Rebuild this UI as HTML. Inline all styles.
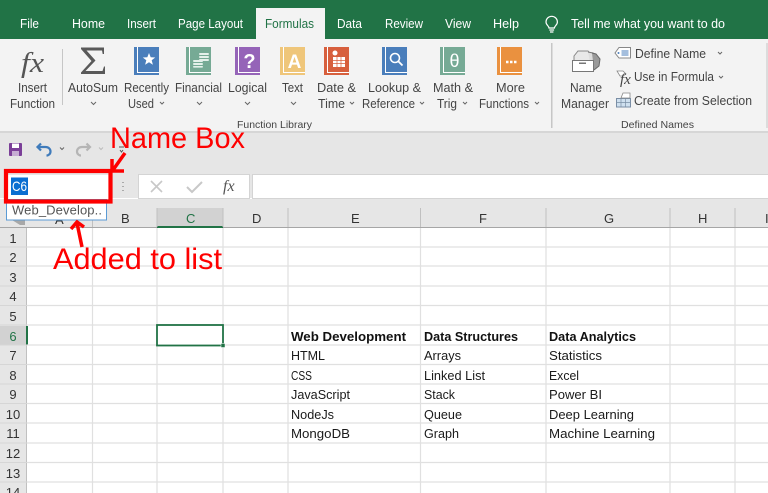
<!DOCTYPE html>
<html><head><meta charset="utf-8"><title>Excel Name Box</title>
<style>
html,body{margin:0;padding:0;background:#fff;width:768px;height:493px;overflow:hidden}
svg{display:block;font-family:"Liberation Sans",sans-serif}
.t{fill:#fff;font-size:12.5px}
.r{fill:#444;font-size:12.5px}
.s{fill:#444;font-size:10.5px}
.c{fill:#1a1a1a;font-size:13px}
.b{fill:#111;font-size:13px;font-weight:bold}
.h{fill:#333;font-size:13px}
.ch{fill:none;stroke:#666;stroke-width:1}
</style></head><body>
<svg width="768" height="493" viewBox="0 0 768 493" xmlns="http://www.w3.org/2000/svg">
<!-- backgrounds -->
<rect width="768" height="39" fill="#217346"/>
<rect y="39" width="768" height="93" fill="#f3f3f3"/>
<rect y="131" width="768" height="2" fill="#d6d6d6"/>
<rect y="133" width="768" height="65" fill="#e6e6e6"/>
<rect x="256" y="8" width="69" height="32" fill="#f3f3f3"/>
<!-- tabs -->
<text class="t" x="20" y="28" textLength="19" lengthAdjust="spacingAndGlyphs">File</text>
<text class="t" x="72" y="28" textLength="33" lengthAdjust="spacingAndGlyphs">Home</text>
<text class="t" x="127" y="28" textLength="29" lengthAdjust="spacingAndGlyphs">Insert</text>
<text class="t" x="178" y="28" textLength="65" lengthAdjust="spacingAndGlyphs">Page Layout</text>
<text x="265" y="28" font-size="12.5" fill="#217346" textLength="49" lengthAdjust="spacingAndGlyphs">Formulas</text>
<text class="t" x="337" y="28" textLength="25" lengthAdjust="spacingAndGlyphs">Data</text>
<text class="t" x="385" y="28" textLength="38" lengthAdjust="spacingAndGlyphs">Review</text>
<text class="t" x="445" y="28" textLength="26" lengthAdjust="spacingAndGlyphs">View</text>
<text class="t" x="493" y="28" textLength="26" lengthAdjust="spacingAndGlyphs">Help</text>
<text class="t" x="571" y="28" textLength="154" lengthAdjust="spacingAndGlyphs">Tell me what you want to do</text>
<!-- bulb -->
<path d="M549 28c0-2-3-3-3-6a5.700 5.700 0 0 1 11.400 0c0 3-3 4-3 6z M549.300 30h4.800 M550 32h3.400" fill="none" stroke="#fff" stroke-width="1.200"/>
<!-- separators -->
<rect x="62" y="49" width="1" height="56" fill="#c6c6c6"/>
<rect x="551" y="43" width="1.500" height="85" fill="#c6c6c6"/>
<rect x="766.500" y="43" width="1" height="85" fill="#c6c6c6"/>
<!-- fx -->
<text x="21" y="72" font-family="Liberation Serif" font-style="italic" font-size="29" fill="#555" textLength="23" lengthAdjust="spacingAndGlyphs">fx</text>
<!-- sigma -->
<path d="M81 47.500H104V54H102.700L102 50.500H86.500L95.500 60.500 85.500 71H102.500L104 66.500H105V74H81V72.500L91.500 61 81 49z" fill="#595959"/>
<!-- books -->
<g>
<rect x="134" y="47" width="25" height="28" fill="#4a7ebb"/><rect x="137" y="47" width="1" height="26" fill="#fff"/><rect x="137" y="72" width="22" height="1" fill="#fff"/>
<path d="M149 53l1.700 4.300 4.500.2-3.500 2.800 1.200 4.500-3.900-2.500-3.900 2.500 1.200-4.500-3.500-2.800 4.500-.2z" fill="#fff"/>
<rect x="186" y="47" width="25" height="28" fill="#76aa95"/><rect x="189" y="47" width="1" height="26" fill="#fff"/><rect x="189" y="72" width="22" height="1" fill="#fff"/>
<rect x="199" y="53" width="10" height="2" rx="1" fill="#e4f0ea"/><rect x="199" y="56" width="10" height="2" rx="1" fill="#e4f0ea"/><rect x="199" y="59" width="10" height="2" rx="1" fill="#e4f0ea"/>
<rect x="193" y="60" width="10" height="2" rx="1" fill="#e4f0ea"/><rect x="193" y="63" width="10" height="2" rx="1" fill="#e4f0ea"/><rect x="193" y="66" width="10" height="1.600" rx=".8" fill="#e4f0ea"/>
<rect x="235" y="47" width="25" height="28" fill="#9564b8"/><rect x="238" y="47" width="1" height="26" fill="#fff"/><rect x="238" y="72" width="22" height="1" fill="#fff"/>
<text x="249.500" y="68" font-size="20" font-weight="bold" fill="#fff" text-anchor="middle">?</text>
<rect x="280" y="47" width="25" height="28" fill="#efc67a"/><rect x="283" y="47" width="1" height="26" fill="#fff"/><rect x="283" y="72" width="22" height="1" fill="#fff"/>
<text x="294.500" y="68" font-size="19" font-weight="bold" fill="#fff" text-anchor="middle">A</text>
<rect x="324" y="47" width="25" height="28" fill="#d75f3d"/><rect x="327" y="47" width="1" height="26" fill="#fff"/><rect x="327" y="72" width="22" height="1" fill="#fff"/>
<circle cx="335" cy="53" r="2.500" fill="#fff"/><rect x="333" y="57" width="12" height="10" fill="#fff"/><path d="M337 57v10M341 57v10M333 60.500h12M333 63.500h12" stroke="#d75f3d" stroke-width=".7"/>
<rect x="382" y="47" width="25" height="28" fill="#4a7ebb"/><rect x="385" y="47" width="1" height="26" fill="#fff"/><rect x="385" y="72" width="22" height="1" fill="#fff"/>
<circle cx="395" cy="58" r="4.500" fill="none" stroke="#fff" stroke-width="1.600"/><path d="M398.500 61.500l4 4" stroke="#fff" stroke-width="1.800"/>
<rect x="440" y="47" width="25" height="28" fill="#76aa95"/><rect x="443" y="47" width="1" height="26" fill="#fff"/><rect x="443" y="72" width="22" height="1" fill="#fff"/>
<text x="454.500" y="67" font-size="18" fill="#fff" text-anchor="middle">θ</text>
<rect x="497" y="47" width="25" height="28" fill="#ea913f"/><rect x="500" y="47" width="1" height="26" fill="#fff"/><rect x="500" y="72" width="22" height="1" fill="#fff"/>
<path d="M506 62h2.500M510 62h2.500M514 62h2.500" stroke="#fff" stroke-width="2.500"/>
</g>
<!-- ribbon labels -->
<text class="r" x="18" y="92" textLength="29" lengthAdjust="spacingAndGlyphs">Insert</text>
<text class="r" x="10" y="108" textLength="45" lengthAdjust="spacingAndGlyphs">Function</text>
<text class="r" x="68" y="92" textLength="50" lengthAdjust="spacingAndGlyphs">AutoSum</text>
<text class="r" x="124" y="92" textLength="45" lengthAdjust="spacingAndGlyphs">Recently</text>
<text class="r" x="128" y="108" textLength="26" lengthAdjust="spacingAndGlyphs">Used</text>
<text class="r" x="175" y="92" textLength="47" lengthAdjust="spacingAndGlyphs">Financial</text>
<text class="r" x="228" y="92" textLength="39" lengthAdjust="spacingAndGlyphs">Logical</text>
<text class="r" x="282" y="92" textLength="21" lengthAdjust="spacingAndGlyphs">Text</text>
<text class="r" x="317" y="92" textLength="39" lengthAdjust="spacingAndGlyphs">Date &amp;</text>
<text class="r" x="318" y="108" textLength="27" lengthAdjust="spacingAndGlyphs">Time</text>
<text class="r" x="368" y="92" textLength="53" lengthAdjust="spacingAndGlyphs">Lookup &amp;</text>
<text class="r" x="362" y="108" textLength="53" lengthAdjust="spacingAndGlyphs">Reference</text>
<text class="r" x="433" y="92" textLength="40" lengthAdjust="spacingAndGlyphs">Math &amp;</text>
<text class="r" x="437" y="108" textLength="20" lengthAdjust="spacingAndGlyphs">Trig</text>
<text class="r" x="496" y="92" textLength="29" lengthAdjust="spacingAndGlyphs">More</text>
<text class="r" x="479" y="108" textLength="50" lengthAdjust="spacingAndGlyphs">Functions</text>
<text class="r" x="570" y="92" textLength="32" lengthAdjust="spacingAndGlyphs">Name</text>
<text class="r" x="561" y="108" textLength="48" lengthAdjust="spacingAndGlyphs">Manager</text>
<text class="r" x="635" y="58" textLength="71" lengthAdjust="spacingAndGlyphs">Define Name</text>
<text class="r" x="634" y="81" textLength="80" lengthAdjust="spacingAndGlyphs">Use in Formula</text>
<text class="r" x="634" y="105" textLength="118" lengthAdjust="spacingAndGlyphs">Create from Selection</text>
<text class="s" x="237" y="128" textLength="75" lengthAdjust="spacingAndGlyphs">Function Library</text>
<text class="s" x="621" y="128" textLength="73" lengthAdjust="spacingAndGlyphs">Defined Names</text>
<!-- chevrons -->
<path class="ch" d="M91 102l2.500 2.500 2.500-2.500M160 102l2 2 2-2M197 102l2.500 2.500 2.500-2.500M245 102l2.500 2.500 2.500-2.500M291 102l2.500 2.500 2.500-2.500M350 102l2 2 2-2M420 102l2 2 2-2M463 102l2 2 2-2M535 102l2 2 2-2M718 52l2 2 2-2M719 76l2 2 2-2"/>
<!-- Name manager icons -->
<path d="M574 56l4-5h10l3 4v6h-17z" fill="#e8e8e8" stroke="#888"/>
<path d="M588 52l5 1 4 4 0 6-6 4" fill="#ddd" stroke="#777"/>
<path d="M592 53l4 1 4 5-1 7-5 4" fill="#999" stroke="#666"/>
<rect x="572.500" y="60.500" width="21" height="11" fill="#fff" stroke="#777"/>
<rect x="579" y="62.500" width="7" height="1.500" fill="#777"/>
<path d="M619 47.500h11.500v10.500h-11.500l-4-5z" fill="#fff" stroke="#888"/><path d="M621.500 51h7M621.500 53h7M621.500 55h7" stroke="#4a7ebb"/><circle cx="618.500" cy="53" r="1" fill="#4a7ebb"/>
<path d="M617 71h6l3 3-3 2h-3z" fill="#fff" stroke="#888" stroke-width=".8"/>
<text x="620" y="84" font-family="Liberation Serif" font-style="italic" font-size="15" fill="#444">fx</text>
<rect x="616.500" y="98.500" width="14" height="8.500" fill="#cfe0ef" stroke="#7a8ea5"/><path d="M621 98v9M625.500 98v9M616 102.500h14" stroke="#7a8ea5" stroke-width=".7"/>
<path d="M621 98l2-5h7v5z" fill="#fff" stroke="#888" stroke-width=".8"/>
<!-- QAT -->
<rect x="9" y="143" width="13" height="13" rx="1" fill="#7b3f98"/><rect x="12" y="143.500" width="7" height="4.500" fill="#fff"/><rect x="12" y="151" width="7" height="5" fill="#c6add3"/>
<path d="M41 143.500l-3.500 3.500 3.500 3.500M37.500 147h8c3 0 5 2 5 4.500s-2 4-4 4" fill="none" stroke="#3f7bbb" stroke-width="2.200"/>
<path d="M60 147.500l2 2 2-2" class="ch"/>
<path d="M86.500 143.500l3.500 3.500-3.500 3.500M90 147h-8c-3 0-5 2-5 4.500s2 4 4 4" fill="none" stroke="#b5b5b5" stroke-width="2.200"/>
<path d="M99 147.500l2 2 2-2" fill="none" stroke="#bbb"/>
<path d="M119 147h5M120 150l1.500 2 1.500-2" fill="none" stroke="#555"/>
<!-- formula bar -->
<rect x="6" y="175" width="103" height="24" fill="#fff"/>
<path d="M123 182v1M123 186v1M123 190v1" stroke="#aaa" stroke-width="2"/>
<rect x="138.500" y="174.500" width="111" height="24" fill="#fff" stroke="#d4d4d4"/>
<rect x="252.500" y="174.500" width="516" height="24" fill="#fff" stroke="#d4d4d4"/>
<path d="M151 181l11 11M162 181l-11 11" stroke="#c8c8c8" stroke-width="1.600"/>
<path d="M187 187l5 5 10-10" fill="none" stroke="#c8c8c8" stroke-width="2"/>
<text x="223" y="191" font-family="Liberation Serif" font-style="italic" font-size="16" fill="#555">fx</text>
<!-- column headers -->
<rect y="199" width="768" height="28" fill="#e6e6e6"/>
<rect x="157" y="208" width="66" height="19" fill="#d2d2d2"/>
<rect y="227" width="768" height="1" fill="#a6a6a6"/>
<rect x="157" y="226" width="66" height="2" fill="#217346"/>
<path d="M92.500 208v19M157 208v19M223 208v19M288 208v19M420.500 208v19M546 208v19M670 208v19M735 208v19" stroke="#c0c0c0"/>
<path d="M12 220H25V225H20z" fill="#a8a8a8"/>
<text class="h" x="55" y="224">A</text>
<text class="h" x="121" y="223">B</text>
<text x="186" y="223" font-size="13" fill="#217346">C</text>
<text class="h" x="252" y="223">D</text>
<text class="h" x="351" y="223">E</text>
<text class="h" x="479" y="223">F</text>
<text class="h" x="604" y="223">G</text>
<text class="h" x="698" y="223">H</text>
<text class="h" x="765" y="223">I</text>
<!-- row headers -->
<rect y="228" width="27" height="265" fill="#e6e6e6"/>
<rect y="326" width="27" height="19" fill="#d2d2d2"/>
<rect x="26" y="228" width="1" height="265" fill="#c0c0c0"/>
<rect x="26" y="326" width="2" height="19" fill="#217346"/>
<path d="M0 247h27M0 266h27M0 286h27M0 305.500h27M0 325h27M0 345h27M0 364.500h27M0 384h27M0 403.500h27M0 423h27M0 443h27M0 462.500h27M0 482h27" stroke="#d6d6d6"/>
<g text-anchor="middle">
<text class="h" x="13" y="243">1</text><text class="h" x="13" y="262">2</text><text class="h" x="13" y="282">3</text><text class="h" x="13" y="301">4</text><text class="h" x="13" y="321">5</text>
<text x="13" y="341" font-size="13" fill="#217346">6</text>
<text class="h" x="13" y="360">7</text><text class="h" x="13" y="380">8</text><text class="h" x="13" y="399">9</text><text class="h" x="13" y="419">10</text><text class="h" x="13" y="438">11</text><text class="h" x="13" y="458">12</text><text class="h" x="13" y="478">13</text><text class="h" x="13" y="497">14</text>
</g>
<!-- gridlines -->
<path d="M27 247H768M27 266H768M27 286H768M27 305.500H768M27 325H768M27 345H768M27 364.500H768M27 384H768M27 403.500H768M27 423H768M27 443H768M27 462.500H768M27 482H768M92.500 228V493M157 228V493M223 228V493M288 228V493M420.500 228V493M546 228V493M670 228V493M735 228V493" stroke="#e0e0e0" stroke-width="1.200" fill="none"/>
<!-- selected cell -->
<rect x="157" y="325" width="66" height="20.500" fill="#fff" stroke="#217346" stroke-width="1.800"/>
<rect x="221" y="343.500" width="4" height="4" fill="#217346" stroke="#fff" stroke-width=".5"/>
<!-- cells -->
<text class="b" x="291" y="341" textLength="115" lengthAdjust="spacingAndGlyphs">Web Development</text>
<text class="b" x="424" y="341" textLength="94" lengthAdjust="spacingAndGlyphs">Data Structures</text>
<text class="b" x="549" y="341" textLength="87" lengthAdjust="spacingAndGlyphs">Data Analytics</text>
<text class="c" x="291" y="360" textLength="34" lengthAdjust="spacingAndGlyphs">HTML</text>
<text class="c" x="424" y="360" textLength="37" lengthAdjust="spacingAndGlyphs">Arrays</text>
<text class="c" x="549" y="360" textLength="53" lengthAdjust="spacingAndGlyphs">Statistics</text>
<text class="c" x="291" y="380" textLength="21" lengthAdjust="spacingAndGlyphs">CSS</text>
<text class="c" x="424" y="380" textLength="61" lengthAdjust="spacingAndGlyphs">Linked List</text>
<text class="c" x="549" y="380" textLength="30" lengthAdjust="spacingAndGlyphs">Excel</text>
<text class="c" x="291" y="399" textLength="59" lengthAdjust="spacingAndGlyphs">JavaScript</text>
<text class="c" x="424" y="399" textLength="31" lengthAdjust="spacingAndGlyphs">Stack</text>
<text class="c" x="549" y="399" textLength="53" lengthAdjust="spacingAndGlyphs">Power BI</text>
<text class="c" x="291" y="419" textLength="43" lengthAdjust="spacingAndGlyphs">NodeJs</text>
<text class="c" x="424" y="419" textLength="38" lengthAdjust="spacingAndGlyphs">Queue</text>
<text class="c" x="549" y="419" textLength="85" lengthAdjust="spacingAndGlyphs">Deep Learning</text>
<text class="c" x="291" y="438" textLength="59" lengthAdjust="spacingAndGlyphs">MongoDB</text>
<text class="c" x="424" y="438" textLength="35" lengthAdjust="spacingAndGlyphs">Graph</text>
<text class="c" x="549" y="438" textLength="106" lengthAdjust="spacingAndGlyphs">Machine Learning</text>
<!-- dropdown -->
<rect x="6.500" y="199.500" width="100" height="20.500" fill="#fff" stroke="#5b9bd5"/>
<text x="12" y="214.500" font-size="13" fill="#555" textLength="90" lengthAdjust="spacing">Web_Develop..</text>
<!-- name box value -->
<rect x="11" y="177.500" width="17" height="17.500" fill="#0a6ed1"/>
<text x="12" y="191" font-size="14" fill="#fff" textLength="15" lengthAdjust="spacingAndGlyphs">C6</text>
<!-- annotations -->
<rect x="6" y="171" width="104.500" height="30.500" fill="none" stroke="#fe0000" stroke-width="4.200"/>
<text x="110" y="148" font-size="30" fill="#fe0000" textLength="135" lengthAdjust="spacingAndGlyphs">Name Box</text>
<text x="53" y="269" font-size="30" fill="#fe0000" textLength="169" lengthAdjust="spacingAndGlyphs">Added to list</text>
<path d="M125 153L113 170M112 159V171H124" fill="none" stroke="#fe0000" stroke-width="3.500"/>
<path d="M82 247L77 223M71 229L77 222L84 227" fill="none" stroke="#fe0000" stroke-width="3.500"/>
</svg>
</body></html>
